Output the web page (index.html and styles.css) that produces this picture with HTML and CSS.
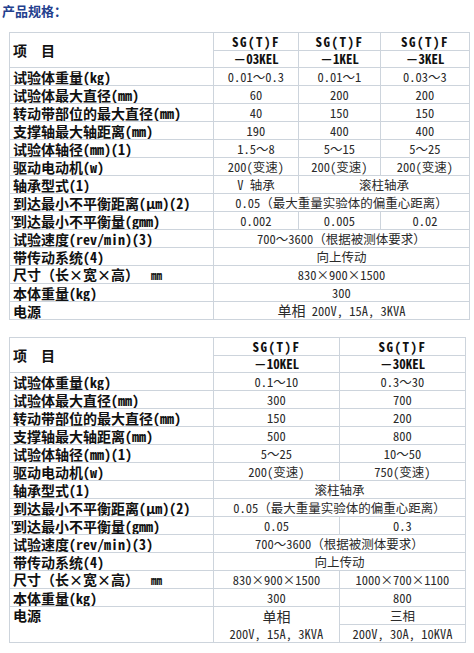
FILE: index.html
```html
<!DOCTYPE html>
<html lang="zh">
<head>
<meta charset="utf-8">
<title>产品规格</title>
<link rel="stylesheet" href="styles.css">
</head>
<body>
<div class="title">产品规格：</div>
<table class="spec spec1">
  <colgroup><col class="c-label"><col class="c1a"><col class="c1b"><col class="c1c"></colgroup>
  <tr class="hrow1">
    <td class="lbl head" rowspan="2">项&nbsp;&nbsp;目</td>
    <td class="model sg">SG(T)F</td><td class="model sg">SG(T)F</td><td class="model sg">SG(T)F</td>
  </tr>
  <tr class="hrow2">
    <td class="model">－03KEL</td><td class="model">－1KEL</td><td class="model">－3KEL</td>
  </tr>
  <tr><td class="lbl">试验体重量(kg)</td><td>0.01～0.3</td><td>0.01～1</td><td>0.03～3</td></tr>
  <tr><td class="lbl">试验体最大直径(mm)</td><td>60</td><td>200</td><td>200</td></tr>
  <tr><td class="lbl">转动带部位的最大直径(mm)</td><td>40</td><td>150</td><td>150</td></tr>
  <tr><td class="lbl">支撑轴最大轴距离(mm)</td><td>190</td><td>400</td><td>400</td></tr>
  <tr><td class="lbl">试验体轴径(mm)(1)</td><td>1.5～8</td><td>5～15</td><td>5～25</td></tr>
  <tr><td class="lbl">驱动电动机(w)</td><td>200(变速)</td><td>200(变速)</td><td>200(变速)</td></tr>
  <tr><td class="lbl">轴承型式(1)</td><td>V 轴承</td><td colspan="2">滚柱轴承</td></tr>
  <tr><td class="lbl">到达最小不平衡距离(μm)(2)</td><td colspan="3">0.05（最大重量实验体的偏重心距离）</td></tr>
  <tr><td class="lbl"><span class="tick">'</span>到达最小不平衡量(gmm)</td><td>0.002</td><td>0.005</td><td>0.02</td></tr>
  <tr><td class="lbl">试验速度(rev/min)(3)</td><td colspan="3">700～3600（根据被测体要求）</td></tr>
  <tr><td class="lbl">带传动系统(4)</td><td colspan="3">向上传动</td></tr>
  <tr><td class="lbl">尺寸（长×宽×高）<span class="unit">mm</span></td><td colspan="3">830×900×1500</td></tr>
  <tr><td class="lbl">本体重量(kg)</td><td colspan="3">300</td></tr>
  <tr><td class="lbl">电源</td><td colspan="3"><span class="big">单相</span> 200V, 15A, 3KVA</td></tr>
</table>

<table class="spec spec2">
  <colgroup><col class="c-label"><col class="c2a"><col class="c2b"></colgroup>
  <tr class="hrow1">
    <td class="lbl head" rowspan="2">项&nbsp;&nbsp;目</td>
    <td class="model sg">SG(T)F</td><td class="model sg">SG(T)F</td>
  </tr>
  <tr class="hrow2">
    <td class="model">－10KEL</td><td class="model">－30KEL</td>
  </tr>
  <tr><td class="lbl">试验体重量(kg)</td><td>0.1～10</td><td>0.3～30</td></tr>
  <tr><td class="lbl">试验体最大直径(mm)</td><td>300</td><td>700</td></tr>
  <tr><td class="lbl">转动带部位的最大直径(mm)</td><td>150</td><td>200</td></tr>
  <tr><td class="lbl">支撑轴最大轴距离(mm)</td><td>500</td><td>800</td></tr>
  <tr><td class="lbl">试验体轴径(mm)(1)</td><td>5～25</td><td>10～50</td></tr>
  <tr><td class="lbl">驱动电动机(w)</td><td>200(变速)</td><td>750(变速)</td></tr>
  <tr><td class="lbl">轴承型式(1)</td><td colspan="2">滚柱轴承</td></tr>
  <tr><td class="lbl">到达最小不平衡距离(μm)(2)</td><td colspan="2">0.05（最大重量实验体的偏重心距离）</td></tr>
  <tr><td class="lbl"><span class="tick">'</span>到达最小不平衡量(gmm)</td><td>0.05</td><td>0.3</td></tr>
  <tr><td class="lbl">试验速度(rev/min)(3)</td><td colspan="2">700～3600（根据被测体要求）</td></tr>
  <tr><td class="lbl">带传动系统(4)</td><td colspan="2">向上传动</td></tr>
  <tr><td class="lbl">尺寸（长×宽×高）<span class="unit">mm</span></td><td>830×900×1500</td><td>1000×700×1100</td></tr>
  <tr><td class="lbl">本体重量(kg)</td><td>300</td><td>800</td></tr>
  <tr class="prow"><td class="lbl top" rowspan="2">电源</td><td rowspan="2" class="two"><span class="big">单相</span><br>200V, 15A, 3KVA</td><td class="big">三相</td></tr>
  <tr class="prow"><td>200V, 30A, 10KVA</td></tr>
</table>
</body>
</html>
```

FILE: styles.css
```css
html, body {
  margin: 0;
  padding: 0;
  background: #ffffff;
}

body {
  font-family: "Noto Sans Mono CJK SC", "Noto Sans CJK SC", "DejaVu Sans Mono", monospace;
  color: #2a2a2a;
}

.title {
  font-family: "Noto Sans CJK SC", sans-serif;
  font-weight: bold;
  font-size: 13px;
  line-height: 22px;
  color: #23408e;
  padding-left: 2px;
  margin-bottom: 10px;
}

.spec {
  border-collapse: collapse;
  margin-left: 9px;
  table-layout: fixed;
}

.spec1 { width: 461px; }
.spec2 { width: 456px; margin-top: 17px; }

.c-label { width: 204px; }
.c1a { width: 85px; }
.c1b { width: 82px; }
.c1c { width: 89px; }
.c2a { width: 126px; }
.c2b { width: 126px; }

.spec td {
  border: 1px solid #cdd4dc;
  height: 17px;
  padding: 0 2px;
  font-size: 12.5px;
  line-height: 16px;
  text-align: center;
  vertical-align: middle;
  white-space: nowrap;
  overflow: hidden;
}

.spec .hrow1 td { height: 17px; }
.spec .hrow2 td { height: 16px; }

.spec td.lbl {
  text-align: left;
  padding-left: 3px;
  font-family: "Noto Sans Mono CJK SC", "Noto Sans CJK SC", sans-serif;
  font-weight: bold;
  font-size: 14px;
  color: #111111;
}

.spec td.head {
  font-size: 14px;
}

.spec td.top {
  vertical-align: top;
}

.spec td.model {
  font-family: "Noto Sans Mono CJK SC", "Noto Sans CJK SC", sans-serif;
  font-weight: bold;
  font-size: 13px;
  color: #111111;
}

.spec td.sg {
  letter-spacing: 1.5px;
}

.tick {
  display: inline-block;
  width: 3px;
  margin-left: -3px;
  font-size: 10px;
  vertical-align: top;
}

.unit {
  font-size: 11px;
  margin-left: 12px;
}

.big {
  font-size: 14px;
}

.spec .prow td { height: 17px; }

.spec td.two {
  line-height: 17px;
}
```
